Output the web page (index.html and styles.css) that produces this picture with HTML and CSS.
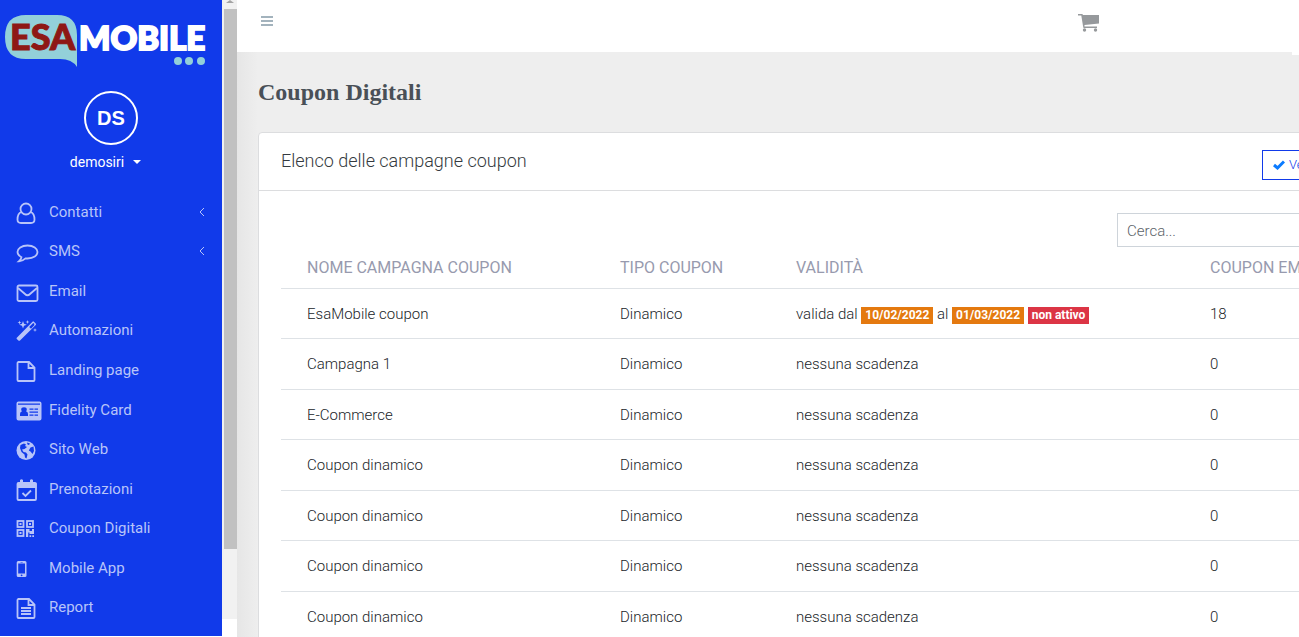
FILE: index.html
```html
<!DOCTYPE html>
<html lang="it">
<head>
<meta charset="utf-8">
<title>Coupon Digitali</title>
<link rel="stylesheet" href="styles.css">
</head>
<body>
<aside class="sidebar">
  <a class="logo" href="#" aria-label="EsaMobile">
    <svg width="222" height="78" viewBox="0 0 222 78">
      <path class="logo-bubble" d="M26 15H57Q77 15 77 35V67Q72 59 60 59H26Q5 59 5 37Q5 15 26 15Z"/>
      <text class="logo-text logo-esa" x="10" y="50">ESA</text>
      <text class="logo-text logo-mobile" x="79" y="50">MOBILE</text>
      <g class="logo-bubble"><circle cx="178" cy="61" r="4"/><circle cx="189" cy="61" r="4"/><circle cx="201" cy="61" r="4"/></g>
    </svg>
  </a>
  <div class="profile">
    <span class="avatar">DS</span>
    <button class="user" type="button">demosiri <span class="caret"></span></button>
  </div>
  <nav class="menu">
    <a href="#"><svg class="icon" viewBox="0 0 26 24"><g class="line"><ellipse cx="10" cy="9" rx="5.5" ry="5.5"/><path d="M5.5 12C2.5 13 1.5 16 1.5 19.500Q1.500 23 5 23H15Q18.500 23 18.500 19.500C18.500 16 17.500 13 14.500 12"/></g></svg>Contatti<svg class="chevron" viewBox="0 0 6 10"><path d="M5 1L1 5L5 9"/></svg></a>
    <a href="#"><svg class="icon" viewBox="0 0 26 24"><path class="line" d="M11.500 6.500C17.500 6.500 21.500 9.500 21.500 13S17.500 19.500 11.500 19.500L9.500 19.400Q6.500 22.200 3 22.300Q5.200 20.500 5.500 18.200Q1.500 16.200 1.500 13C1.500 9.500 5.500 6.500 11.500 6.500Z"/></svg>SMS<svg class="chevron" viewBox="0 0 6 10"><path d="M5 1L1 5L5 9"/></svg></a>
    <a href="#"><svg class="icon" viewBox="0 0 26 24"><g class="line"><rect x="1.500" y="6.500" width="20" height="15.500" rx="1.500"/><path d="M2 9L9 15Q11.500 17.500 14 15L21 9"/></g></svg>Email</a>
    <a href="#"><svg class="icon" viewBox="0 0 26 24"><path class="fill" fill-rule="evenodd" d="M.8 19.800L16.500 3.700Q17.200 3 17.900 3.700L19.700 5.500Q20.400 6.200 19.700 6.900L4 22.500Q3.200 23.200 2.400 22.500L.8 21Q.2 20.400 .8 19.800ZM13.200 9L15 10.700L18.300 7.300V5.800L17.200 4.900Z"/><path class="fill" d="M7 3L8 5.800L10.800 6.800L8 7.800L7 10.600L6 7.800L3.200 6.800L6 5.800ZM3.500 2.500L4 4L5.500 4.500L4 5L3.500 6.500L3 5L1.500 4.500L3 4ZM11.500 2L12 3.500L13.500 4L12 4.500L11.500 6L11 4.500L9.500 4L11 3.500ZM19 10L19.500 11.500L21 12L19.500 12.500L19 14L18.500 12.500L17 12L18.500 11.500Z"/></svg>Automazioni</a>
    <a href="#"><svg class="icon" viewBox="0 0 26 24"><path class="line" d="M2 4H13L18.500 9.500V22Q18.500 23 17.500 23H2.500Q1.500 23 1.500 22V5Q1.500 4 2.500 4M12.500 4V10H18.500"/></svg>Landing page</a>
    <a href="#"><svg class="icon" viewBox="0 0 26 24"><path class="fill" fill-rule="evenodd" d="M2.500 3.500H23.500Q25.500 3.500 25.500 5.500V20.500Q25.500 22.500 23.500 22.500H2.500Q.5 22.500 .5 20.500V5.500Q.5 3.500 2.500 3.500ZM2 5.500V6.800H24V5.500ZM4 18H12V16Q12 13.800 10 13.200Q10.800 12.500 10.800 11.500Q10.800 9.300 8 9.300Q5.200 9.300 5.200 11.500Q5.200 12.500 6 13.200Q4 13.800 4 16ZM13.500 10.500V11.700H17.500V10.500ZM18.500 10.500V11.700H22V10.500ZM13.500 13.500V14.700H22V13.500ZM13.500 16.500V17.700H17.500V16.500ZM18.500 16.500V17.700H22V16.500Z"/></svg>Fidelity Card</a>
    <a href="#"><svg class="icon" viewBox="0 0 26 24"><circle class="fill" cx="10" cy="13.500" r="9.500"/><path class="cut" d="M4.500 8L8 6.500L10 7.500L9 9L11 10L8.500 12L6 12.500L7.500 15L10 15.500L11.500 17.500L10.500 21.500L9 20.500L8.500 17.500L5.500 15L4 11ZM11 5.500L14 6.500L13 8L11.500 7.500ZM14.500 10.500L17.500 9.500L18 14L16.500 17L14.500 14.500L12.800 13.500Z"/></svg>Sito Web</a>
    <a href="#"><svg class="icon" viewBox="0 0 26 24"><rect class="line" x="1.500" y="6" width="18.500" height="17" rx="1"/><path class="fill" d="M1 6H20.500V11H1ZM4 3Q5.500 1.500 7 3V8H4ZM14 3Q15.500 1.500 17 3V8H14Z"/><path class="line" d="M6.500 16L9.500 19L15 13.500"/></svg>Prenotazioni</a>
    <a href="#"><svg class="icon" viewBox="0 0 26 24"><g class="line"><rect x="1.500" y="5" width="6" height="6"/><rect x="11" y="5" width="6" height="6"/><rect x="1.500" y="14" width="6" height="6"/></g><path class="fill" d="M3.500 7H5.500V9H3.500ZM13 7H15V9H13ZM3.500 16H5.500V18H3.500ZM10 13H13.500V15H16V13H18V18H13.500V16.500H12.200V21H10ZM13.500 19.200H15.200V21H13.500ZM16.300 19.200H18V21H16.300Z"/></svg>Coupon Digitali</a>
    <a href="#"><svg class="icon" viewBox="0 0 26 24"><path class="fill" fill-rule="evenodd" d="M2.200 5H9Q10.500 5 10.500 6.500V19.500Q10.500 21 9 21H2.200Q.7 21 .7 19.500V6.500Q.7 5 2.200 5ZM2.200 7.500V17.500H9V7.500ZM4.500 5.900V6.600H6.700V5.900ZM5.600 18.400A.9 .9 0 1 0 5.600 20.200A.9 .9 0 1 0 5.600 18.400Z"/></svg>Mobile App</a>
    <a href="#"><svg class="icon" viewBox="0 0 26 24"><path class="line" d="M2 4H13L18.500 9.500V22Q18.500 23 17.500 23H2.500Q1.500 23 1.500 22V5Q1.500 4 2.500 4M12.500 4V10H18.500M5 13H15M5 16H15M5 19H15"/></svg>Report</a>
  </nav>
</aside>
<div class="scroller"><div class="track"><span class="arrow"></span><div class="thumb"></div></div></div>
<main class="main">
  <header class="topbar">
    <button class="plain" type="button" aria-label="Menu"><svg width="12" height="10" viewBox="0 0 12 10"><path fill="#a3b3bd" d="M0 0H12V2H0ZM0 4H12V6H0ZM0 8H12V10H0Z"/></svg></button>
    <a class="cart" href="#" aria-label="Carrello"><svg width="22" height="20" viewBox="0 0 22 20"><path fill="#96999c" d="M0 1H4.300L5 2H21V10.500L6.500 12V13.500H19V15H5.500L5 13L3.300 2.500H0Z"/><circle cx="6.500" cy="17" r="1.700" fill="#96999c"/><circle cx="17.500" cy="17" r="1.700" fill="#96999c"/></svg></a>
  </header>
  <div class="content">
    <h1>Coupon Digitali</h1>
    <section class="card">
      <div class="card-head">
        <h2>Elenco delle campagne coupon</h2>
        <button class="verify" type="button"><svg width="12" height="10" viewBox="0 0 12 10"><path d="M1 5L4.500 8L11 1.500" fill="none" stroke="#0b7bff" stroke-width="3"/></svg>Verifica</button>
      </div>
      <div class="card-body">
        <input class="search" type="search" placeholder="Cerca..." aria-label="Cerca">
        <table>
          <colgroup><col class="c-name"><col class="c-type"><col class="c-valid"><col></colgroup>
          <thead><tr><th>NOME CAMPAGNA COUPON</th><th>TIPO COUPON</th><th>VALIDITÀ</th><th>COUPON EMESSI</th></tr></thead>
          <tbody>
            <tr><td>EsaMobile coupon</td><td>Dinamico</td><td>valida dal <span class="badge">10/02/2022</span> al <span class="badge">01/03/2022</span> <span class="badge off">non attivo</span></td><td>18</td></tr>
            <tr><td>Campagna 1</td><td>Dinamico</td><td>nessuna scadenza</td><td>0</td></tr>
            <tr><td>E-Commerce</td><td>Dinamico</td><td>nessuna scadenza</td><td>0</td></tr>
            <tr><td>Coupon dinamico</td><td>Dinamico</td><td>nessuna scadenza</td><td>0</td></tr>
            <tr><td>Coupon dinamico</td><td>Dinamico</td><td>nessuna scadenza</td><td>0</td></tr>
            <tr><td>Coupon dinamico</td><td>Dinamico</td><td>nessuna scadenza</td><td>0</td></tr>
            <tr><td>Coupon dinamico</td><td>Dinamico</td><td>nessuna scadenza</td><td>0</td></tr>
          </tbody>
        </table>
      </div>
    </section>
  </div>
</main>
</body>
</html>
```
FILE: styles.css
```css
* { box-sizing: border-box; }
body { margin: 0; height: 100vh; display: flex; overflow: hidden; background: #fff; font: 300 16px/24px Roboto, sans-serif; color: #212529; }
button { font: inherit; background: none; border: 0; padding: 0; cursor: pointer; }
a { color: inherit; text-decoration: none; }

.sidebar { width: 222px; flex: none; margin-bottom: 1px; padding-bottom: 9px; display: flex; flex-direction: column; background: #113aea; color: #b8c4f9; }
.logo { display: block; height: 78px; }
.logo-text { font: 900 36px Lato, sans-serif; stroke-width: 1px; }
.logo-bubble { fill: #93d0d9; }
.logo-esa { fill: #8e1815; stroke: #8e1815; }
.logo-mobile { fill: #fff; stroke: #fff; font-size: 33px; stroke-width: 2px; }
.profile { display: flex; flex-direction: column; align-items: center; padding: 13px 0 18px; gap: 5px; }
.avatar { width: 54px; height: 54px; border: 2px solid #fff; border-radius: 50%; display: grid; place-items: center; color: #fff; font: bold 20px/24px "Liberation Sans", sans-serif; }
.user { display: flex; align-items: center; gap: 9px; padding-right: 11px; color: #fff; font-weight: 400; font-size: 14px; }
.caret { border: 4px solid transparent; border-top-color: #fff; border-bottom: 0; }
.menu { flex: 1; display: flex; flex-direction: column; font-size: 15px; font-weight: 400; }
.menu a { flex: 1; display: flex; align-items: center; padding: 0 17px 0 16px; }
.icon { width: 26px; height: 24px; margin-right: 7px; }
.line { fill: none; stroke: #b8c4f9; stroke-width: 1.8; }
.fill { fill: #b8c4f9; }
.cut { fill: #113aea; }
.chevron { width: 6px; height: 10px; margin-left: auto; fill: none; stroke: #b8c4f9; }

.scroller { width: 15px; flex: none; padding-bottom: 18px; }
.track { height: 100%; background: #f1f1f1; padding-left: 2px; display: flex; flex-direction: column; }
.arrow { height: 3px; width: 8px; margin: 0 2px 6px; border: 4px solid transparent; border-top: 0; border-bottom: 3px solid #a3a3a3; }
.thumb { height: 540px; background: #c1c1c1; }

.main { flex: 1; min-width: 0; overflow: hidden; display: flex; flex-direction: column; background: #eee; }
.topbar { position: relative; height: 52px; flex: none; display: flex; justify-content: space-between; padding: 13px 199px 0 24px; background: #fff; }
.topbar::after { content: ""; position: absolute; right: 0; top: 100%; width: 7px; height: 3px; background: #fff; }
.plain { height: 16px; display: flex; align-items: center; }
.cart svg { display: block; }
.content { flex: 1; padding: 26px 0 0 21px; background: linear-gradient(90deg, #e6e6e6, #eee 21px); }
h1 { margin: 0 0 26px; font: bold 24px/28px "Liberation Serif", serif; color: #495057; }
.card { min-width: 1120px; border: 1px solid #dcdddf; border-radius: 4px; background: #fff; }
.card-head { height: 58px; padding: 0 22px; display: flex; align-items: flex-start; justify-content: space-between; border-bottom: 1px solid #dcdddf; }
h2 { margin: 16px 0 0; font-size: 18px; line-height: 24px; font-weight: 300; color: #343a40; }
.verify { width: 93px; height: 30px; margin-top: 17px; padding-left: 10px; border: 1px solid #113aea; display: flex; align-items: center; gap: 4px; font-size: 13px; color: #113aea; }
.card-body { padding: 22px; display: flex; flex-direction: column; }
.search { align-self: flex-end; width: 238px; height: 34px; padding: 1px 9px 0; border: 1px solid #ced4da; background: #fff; font: 300 15px/24px Roboto, sans-serif; }
.search::placeholder { color: #5c636a; opacity: 1; }
table { width: 100%; table-layout: fixed; border-collapse: separate; border-spacing: 0; font-size: 15px; }
.c-name { width: 313px; }
.c-type { width: 176px; }
.c-valid { width: 414px; }
th, td { padding: 0 0 0 26px; text-align: left; white-space: nowrap; border-bottom: 1px solid #dee2e6; }
th { height: 42px; font-weight: 400; font-size: 16px; color: #979aae; }
td { height: 50px; }
tr:nth-child(even) td { height: 51px; }
.badge { display: inline-block; padding: 0 4px; background: #e4790f; color: #fff; font-size: 12px; line-height: 17px; font-weight: 700; }
.off { background: #dc3545; }
```
